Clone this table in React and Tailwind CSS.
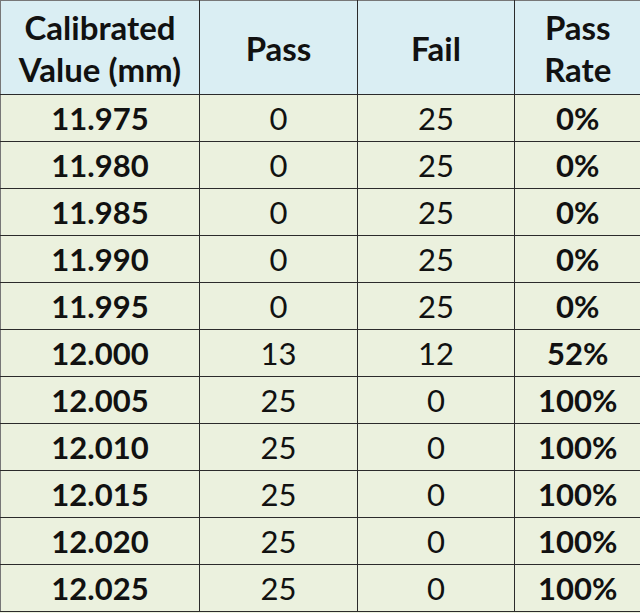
import React from 'react';

const rows = [
  ['11.975', '0', '25', '0%'],
  ['11.980', '0', '25', '0%'],
  ['11.985', '0', '25', '0%'],
  ['11.990', '0', '25', '0%'],
  ['11.995', '0', '25', '0%'],
  ['12.000', '13', '12', '52%'],
  ['12.005', '25', '0', '100%'],
  ['12.010', '25', '0', '100%'],
  ['12.015', '25', '0', '100%'],
  ['12.020', '25', '0', '100%'],
  ['12.025', '25', '0', '100%'],
];

export default function App() {
  return (
    <div className="w-[640px] h-[613px] bg-[#ebf1de] overflow-hidden" style={{ fontFamily: 'Lato, "Open Sans", sans-serif' }}>
      <table className="border-collapse table-fixed w-[640px] text-[#111] border-l border-t border-[#777]">
        <colgroup>
          <col className="w-[199px]" />
          <col className="w-[158px]" />
          <col className="w-[157px]" />
          <col className="w-[126px]" />
        </colgroup>
        <thead>
          <tr className="h-[94px] bg-[#daeef3] text-[33px] font-bold leading-[42px]">
            <th className="p-0 border-b border-r border-[#2b2b2b] font-bold">Calibrated<br />Value (mm)</th>
            <th className="p-0 border-b border-r border-[#2b2b2b] font-bold">Pass</th>
            <th className="p-0 border-b border-r border-[#2b2b2b] font-bold">Fail</th>
            <th className="p-0 border-b border-[#2b2b2b] font-bold">Pass<br />Rate</th>
          </tr>
        </thead>
        <tbody>
          {rows.map((r) => (
            <tr key={r[0]} className="h-[47px] text-[31px] leading-[32px] text-center">
              <td className="p-0 border-b border-r border-[#2b2b2b] font-bold">{r[0]}</td>
              <td className="p-0 border-b border-r border-[#2b2b2b]">{r[1]}</td>
              <td className="p-0 border-b border-r border-[#2b2b2b]">{r[2]}</td>
              <td className="p-0 border-b border-[#2b2b2b] font-bold">{r[3]}</td>
            </tr>
          ))}
        </tbody>
      </table>
    </div>
  );
}
